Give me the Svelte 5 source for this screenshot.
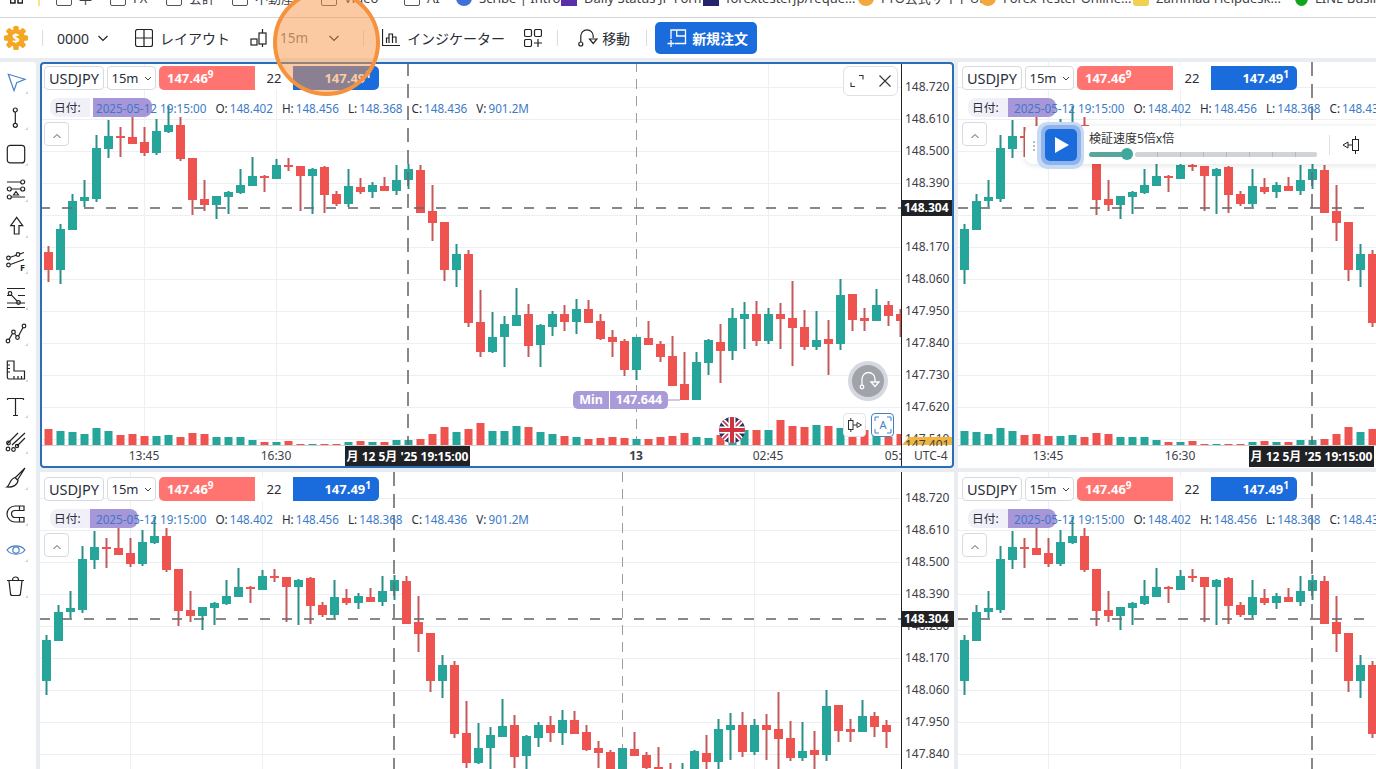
<script>
    // rows: wick top, body top, body bottom, wick bottom, colour, volume top (all in px of the first pane)
    const candles = [
        [246,252,270,282,'r',429],[224,229,270,284,'g',431],[194,201,230,230,'g',432],[180,197,201,207,'g',434],
        [135,148,199,202,'g',428],[120,136,149,158,'g',431],[127,136,138,157,'r',435],[113,137,144,144,'r',434],
        [127,142,153,156,'r',436],[119,131,153,155,'g',436],[106,125,132,133,'g',435],[117,125,159,161,'r',437],
        [158,158,200,215,'r',433],[180,199,205,211,'r',434],[196,196,205,219,'g',437],[191,192,197,214,'g',437],
        [169,185,193,194,'g',437],[157,176,186,186,'g',440],[175,176,178,192,'r',442],[159,165,179,179,'g',442],
        [158,165,167,171,'r',441],[166,166,176,211,'r',444],[168,169,176,214,'g',444],[166,167,195,213,'r',444],
        [191,194,204,206,'r',444],[169,186,204,207,'g',442],[178,187,192,194,'r',441],[182,185,192,198,'g',442],
        [177,186,191,191,'r',442],[165,180,191,195,'g',440],[164,169,180,189,'g',440],[165,170,213,213,'r',439],
        [185,211,223,241,'r',434],[222,222,270,281,'r',427],[244,254,270,287,'g',432],[250,254,323,327,'r',429],
        [290,322,352,357,'r',423],[312,337,352,353,'g',431],[316,324,337,367,'g',431],[288,315,326,326,'g',426],
        [304,314,346,357,'r',427],[324,325,345,367,'g',432],[311,314,327,336,'g',434],[305,314,322,331,'r',436],
        [299,309,322,334,'g',437],[300,309,323,323,'r',439],[314,321,339,340,'r',438],[330,337,342,357,'r',437],
        [339,341,370,376,'r',438],[337,337,370,380,'g',439],[321,338,345,345,'r',439],[341,344,357,362,'r',437],
        [336,356,386,386,'r',436],[352,384,400,400,'r',433],[352,362,400,400,'g',437],[339,340,363,375,'g',438],
        [324,342,351,383,'r',435],[308,318,351,360,'g',440],[302,314,319,349,'g',430],[301,314,341,346,'r',430],
        [308,314,341,344,'g',430],[303,314,319,349,'r',420],[281,318,328,366,'r',426],[310,327,347,350,'r',427],
        [311,340,347,350,'g',425],[320,339,344,375,'r',426],[279,295,344,350,'g',428],[294,294,320,331,'r',437],
        [308,318,321,331,'r',430],[289,305,321,321,'g',433],[301,305,316,326,'r',437],[309,314,321,337,'r',434]
    ];

    const prices = ['148.720','148.610','148.500','148.390','148.280','148.170','148.060','147.950','147.840','147.730','147.620','147.510'];

    const panes = [
        { id: 'a', x: 40, y: 62, w: 914, h: 406, dx: 0, dy: 0, axis: 901, tagLeft: 53, tagWidth: 59, lower: false },
        { id: 'b', x: 958, y: 62, w: 418, h: 406, dx: 904, dy: 0, axis: 0, tagLeft: 49, tagWidth: 49, lower: false },
        { id: 'c', x: 40, y: 472, w: 914, h: 297, dx: -14, dy: 411, axis: 901, tagLeft: 49, tagWidth: 49, lower: true },
        { id: 'd', x: 958, y: 472, w: 418, h: 297, dx: 904, dy: 411, axis: 0, tagLeft: 49, tagWidth: 49, lower: true }
    ];

    const bookmarks = [
        { icon: 'folder', label: '卆', w: 54 },
        { icon: 'folder', label: 'FX', w: 56 },
        { icon: 'folder', label: '会計', w: 66 },
        { icon: 'folder', label: '不動産', w: 89 },
        { icon: 'folder', label: 'Video', w: 83 },
        { icon: 'folder', label: 'AI', w: 52 },
        { icon: 'scribe', label: 'Scribe | Intro', w: 105 },
        { icon: 'purple', label: 'Daily Status JP Form', w: 142 },
        { icon: 'navy', label: 'forextesterjp/reque...', w: 155 },
        { icon: 'gear', label: 'FTO公式サイトURL', w: 122 },
        { icon: 'gear', label: 'Forex Tester Online...', w: 153 },
        { icon: 'note', label: 'Zammad Helpdesk...', w: 162 },
        { icon: 'line', label: 'LINE Business', w: 100 }
    ];
</script>

{#snippet corner()}
    <path class="corner" d="M24 21 L24 24 L21 24 Z" />
{/snippet}

{#snippet chart(p)}
    <svg class="chart" width={p.w} height={p.h} viewBox="{p.x} {p.y} {p.w} {p.h}">
        <defs>
            <clipPath id="plot-{p.id}">
                <rect x={p.x} y={p.y} width={(p.axis || p.x + p.w) - p.x} height={445 + p.dy - p.y} />
            </clipPath>
            <clipPath id="time-{p.id}">
                <rect x={p.x} y={p.y} width={(p.axis || p.x + p.w) - p.x} height={p.h} />
            </clipPath>
        </defs>
        <g clip-path="url(#plot-{p.id})">
            {#each prices as _, i}
                <line class="grid" x1={p.x} x2={p.x + p.w} y1={87.5 + i * 32 + p.dy} y2={87.5 + i * 32 + p.dy} />
            {/each}
            {#each [144, 276, 768] as gx}
                <line class="grid" x1={gx + p.dx + 0.5} x2={gx + p.dx + 0.5} y1={p.y} y2={445 + p.dy} />
            {/each}
            <line class="day" x1={636.5 + p.dx} x2={636.5 + p.dx} y1={p.y} y2={445 + p.dy} />
            <g transform="translate({p.dx} {p.dy})">
                {#each candles as c, k}
                    {@const cx = 48.5 + 12 * k}
                    <rect class="vol {c[4]}" x={cx - 4} y={c[5]} width="8" height={445 - c[5]} />
                    <line class="wick {c[4]}" x1={cx} x2={cx} y1={c[0]} y2={c[3]} />
                    <rect class="candle {c[4]}" x={cx - 4.5} y={c[1]} width="9" height={c[2] - c[1]} />
                {/each}
            </g>
            <line class="cross-h" x1={p.x} x2={p.x + p.w} y1={208 + p.dy} y2={208 + p.dy} />
            <line class="cross-v" x1={408 + p.dx} x2={408 + p.dx} y1={p.y} y2={445 + p.dy} />
        </g>
        <line class="base" x1={p.x} x2={p.axis || p.x + p.w} y1={445.5 + p.dy} y2={445.5 + p.dy} />

        {#if p.axis}
            {#each prices as label, i}
                {#if p.lower || i !== 4}
                    <text class="ax" x="905" y={91 + i * 32 + p.dy}>{label}</text>
                {/if}
            {/each}
            <polygon class="last-tag" points="{902},{445 + p.dy} {909},{437 + p.dy} {954},{437 + p.dy} {954},{445 + p.dy}" />
            <text class="ax" x="905" y={449 + p.dy}>147.401</text>
            <rect class="price-tag" x="902" y={200 + p.dy} width="52" height="16" />
            <text class="tag-text" x="904" y={212 + p.dy}>148.304</text>
        {/if}

        <rect class="time-strip" x={p.x} y={446 + p.dy} width={p.w} height="22" />
        <g clip-path="url(#time-{p.id})">
            <g transform="translate({p.dx} {p.dy})" text-anchor="middle">
                <text class="ax" x="144" y="460">13:45</text>
                <text class="ax" x="276" y="460">16:30</text>
                <text class="ax strong" x="636" y="460">13</text>
                <text class="ax" x="768" y="460">02:45</text>
                <text class="ax" x="900" y="460">05:45</text>
                <rect class="time-tag" x="345" y="446" width="125" height="21" />
                <text class="time-text" x="407.5" y="461">月 12 5月 '25 19:15:00</text>
            </g>
        </g>
        {#if p.axis}
            <text class="ax" x="914" y={460 + p.dy}>UTC-4</text>
            <line class="axis-line" x1={p.axis + 0.5} x2={p.axis + 0.5} y1={p.y} y2={467 + p.dy} />
        {/if}
    </svg>
{/snippet}

{#snippet header(p)}
    <div class="head">
        <div class="sym">USDJPY</div>
        <div class="tf">15m
            <svg width="8" height="5" viewBox="0 0 8 5"><path d="M1 1 L4 4 L7 1" /></svg>
        </div>
        <div class="quote">
            <span class="bid">147.46<sup>9</sup></span>
            <span class="spread">22</span>
            <span class="ask">147.49<sup>1</sup></span>
        </div>
    </div>
    <div class="event" style:left="{p.tagLeft}px" style:width="{p.tagWidth}px"></div>
    <div class="info">
        <span class="lbl">日付:</span>
        <span class="val date">2025-05-12 19:15:00</span>
        <span class="key">O:</span><span class="val">148.402</span>
        <span class="key">H:</span><span class="val">148.456</span>
        <span class="key">L:</span><span class="val">148.368</span>
        <span class="key">C:</span><span class="val">148.436</span>
        <span class="key">V:</span><span class="val">901.2M</span>
    </div>
    <button class="collapse" aria-label="collapse">
        <svg width="10" height="6" viewBox="0 0 10 6"><path d="M1.5 5 L5 1.5 L8.5 5" /></svg>
    </button>
{/snippet}

<div class="page">
    <div class="bookmarks">
        <svg class="apps" width="13" height="6" viewBox="0 0 13 6"><path d="M.5 -3 H5 V3 H.5 Z M8 -3 H12.5 V3 H8 Z" /></svg>
        <span class="bm-sep"></span>
        {#each bookmarks as b}
            <span class="bm" style:width="{b.w}px">
                <span class="bm-icon {b.icon}"></span>{b.label}
            </span>
        {/each}
    </div>

    <div class="toolbar">
        <svg class="logo" width="24" height="24" viewBox="0 0 24 24">
            {#each [0, 45, 90, 135, 180, 225, 270, 315] as a}
                <rect x="9.5" y="0" width="5" height="24" rx="1.5" fill="#f5a623" transform="rotate({a} 12 12)" />
            {/each}
            <circle cx="12" cy="12" r="9" fill="#f5a623" />
            <text x="12" y="16.5" text-anchor="middle" class="logo-text">$</text>
        </svg>
        <span class="sep s1"></span>
        <span class="tb-text acct">0000</span>
        <svg class="chev c1" width="12" height="7" viewBox="0 0 12 7"><path d="M1.5 1 L6 5.5 L10.5 1" /></svg>

        <svg class="tb-icon i-layout" width="18" height="18" viewBox="0 0 18 18"><rect x=".5" y=".5" width="17" height="17" rx="2" /><path d="M9 .5 V17.5 M.5 9 H17.5" /></svg>
        <span class="tb-text t-layout">レイアウト</span>

        <svg class="tb-icon i-candle" width="18" height="18" viewBox="0 0 18 18"><rect x="1" y="10" width="6" height="6" /><rect x="9" y="4" width="7" height="11" /><path d="M12.5 0 V4 M12.5 15 V18" /></svg>
        <span class="tb-text t-tf">15m</span>
        <svg class="chev c2" width="12" height="7" viewBox="0 0 12 7"><path d="M1.5 1 L6 5.5 L10.5 1" /></svg>
        <span class="sep s2"></span>

        <svg class="tb-icon i-ind" width="18" height="18" viewBox="0 0 18 18"><path d="M.5 0 V16 M0 16.5 H18 M4.5 14 V9 H7 V14 M7 14 V5 H10.5 V14 M10.5 14 V8 H14 V14" /></svg>
        <span class="tb-text t-ind">インジケーター</span>
        <svg class="tb-icon i-add" width="18" height="18" viewBox="0 0 18 18"><rect x=".5" y=".5" width="7" height="7" rx="1.5" /><rect x="10.5" y=".5" width="7" height="7" rx="1.5" /><rect x=".5" y="10.5" width="7" height="7" rx="1.5" /><path d="M14 10 V18 M10 14 H18" /></svg>
        <span class="sep s3"></span>

        <svg class="tb-icon i-move" width="20" height="20" viewBox="0 0 20 20"><circle cx="2.8" cy="16" r="2" /><path d="M2.8 14 V8 a6.2 6.2 0 0 1 12.4 0 V10" /><path d="M11.5 11 H19 L15.2 15.5 Z" /></svg>
        <span class="tb-text t-move">移動</span>
        <span class="sep s4"></span>

        <button class="order">
            <svg width="20" height="20" viewBox="0 0 20 20"><path d="M4 11 V2 H18.5 V15.5 H8 M9.7 2 V8 H18.5" /><path d="M4 12 V19 M.5 15.5 H7.5" /></svg>
            新規注文
        </button>
    </div>

    <div class="body">
        <aside class="tools">
            <!-- icon strokes traced off the left rail -->
            <svg class="tool blue" viewBox="0 0 24 24"><path d="M4.3 4.3 L21 9.3 L12.7 12.7 L10 20.7 Z" />{@render corner()}</svg>
            <svg class="tool" viewBox="0 0 24 24"><circle cx="11.3" cy="4" r="2" /><circle cx="11.3" cy="19.3" r="2" /><path d="M11.3 6 V17.3" />{@render corner()}</svg>
            <svg class="tool" viewBox="0 0 24 24"><rect x="3.3" y="3.3" width="17.4" height="17.6" rx="3" />{@render corner()}</svg>
            <svg class="tool" viewBox="0 0 24 24"><path d="M3 4 H16.7 M7.3 11 H16.7 M7.3 19 H21" /><circle cx="18.7" cy="4" r="2" /><circle cx="5.3" cy="11" r="2" /><circle cx="18.7" cy="11" r="2" /><circle cx="5.3" cy="19" r="2" /><path d="M12 13.5 L14.5 17 H9.5 Z" />{@render corner()}</svg>
            <svg class="tool" viewBox="0 0 24 24"><path d="M12.7 3.3 L18.7 11.7 H15 V20 H10.3 V11.7 H6.7 Z" />{@render corner()}</svg>
            <svg class="tool" viewBox="0 0 24 24"><circle cx="4.5" cy="8" r="1.8" /><circle cx="14" cy="4.5" r="1.8" /><circle cx="4.5" cy="15" r="1.8" /><path d="M6.3 7.3 L12.2 5.2 M15.8 4 L20 2.5 M6.3 14.5 L20 9.5" /><text class="tool-f" x="16" y="20.5">F</text>{@render corner()}</svg>
            <svg class="tool" viewBox="0 0 24 24"><path d="M3 2.5 H21 M3 17 H21 M3 21.5 H21 M3 9.5 H8 M14 9.5 H21" /><circle cx="6" cy="7.5" r="1.8" /><circle cx="14.5" cy="16.5" r="1.8" /><path d="M7.3 8.8 L13.2 15.2" />{@render corner()}</svg>
            <svg class="tool" viewBox="0 0 24 24"><circle cx="4" cy="19" r="1.8" /><circle cx="9.5" cy="10" r="1.8" /><circle cx="13.5" cy="15.5" r="1.8" /><circle cx="20" cy="4" r="1.8" /><path d="M5 17.5 L8.5 11.5 M10.5 11.5 L12.5 14 M14.5 14 L19 5.5" />{@render corner()}</svg>
            <svg class="tool" viewBox="0 0 24 24"><path d="M3.3 3 H10 V13 H20.5 V21 H5 A1.7 1.7 0 0 1 3.3 19.3 Z M3.3 7 H6 M3.3 10.5 H6 M3.3 14 H6 M10 21 V18 M14 21 V18 M17.5 21 V18" />{@render corner()}</svg>
            <svg class="tool" viewBox="0 0 24 24"><path d="M3.5 4.5 H19.5 M3.5 4.5 V6 M19.5 4.5 V6 M11.5 4.5 V21.5 M9 21.5 H14" />{@render corner()}</svg>
            <svg class="tool" viewBox="0 0 24 24"><path d="M3 14 L14 3 M8 15 L21 3 M13 16 L21 8" /><circle cx="4" cy="19" r="1.8" /><circle cx="9.5" cy="19.5" r="1.8" /><circle cx="4.5" cy="13" r="1.8" /><circle cx="13" cy="16" r="1.6" />{@render corner()}</svg>
            <svg class="tool" viewBox="0 0 24 24"><path d="M21 2 L11 12 M21 2 L13.5 14 M11 11.5 L14 14.5 C13.5 19 9 21.5 3 21 C6 19.5 5.5 13 11 11.5 Z" />{@render corner()}</svg>
            <svg class="tool" viewBox="0 0 24 24"><path d="M20 4 H11 A8 8 0 0 0 11 20 H20 V15.5 H11 A3.5 3.5 0 0 1 11 8.5 H20 Z M15.5 4 V8.5 M15.5 15.5 V20" />{@render corner()}</svg>
            <svg class="tool blue" viewBox="0 0 24 24"><path d="M3 12 C7 6.5 17 6.5 21 12 C17 17.5 7 17.5 3 12 Z" /><circle cx="12" cy="12" r="3.2" />{@render corner()}</svg>
            <svg class="tool" viewBox="0 0 24 24"><path d="M3 6.5 H20 M8.5 6 A3 3 0 0 1 14.5 6 M5 7 L6.5 19.5 A2 2 0 0 0 8.5 21.5 H14.5 A2 2 0 0 0 16.5 19.5 L18 7" />{@render corner()}</svg>
        </aside>

        <div class="panes">
            {#each panes as p}
                <section class="pane" class:lower={p.lower} class:active={p.id === 'a'}>
                    {@render chart(p)}
                    {@render header(p)}

                    {#if p.id === 'a'}
                        <div class="win-box">
                            <svg width="18" height="18" viewBox="0 0 18 18"><path d="M11 3.5 H15 V7.5 M3 10.5 V14.5 H7" /></svg>
                            <svg width="18" height="18" viewBox="0 0 18 18"><path d="M3.5 3.5 L14.5 14.5 M14.5 3.5 L3.5 14.5" /></svg>
                        </div>
                        <div class="min-line"></div>
                        <div class="min-tag"><span class="min-k">Min</span><span class="min-v">147.644</span></div>
                        <div class="round">
                            <div class="round-in">
                                <svg width="24" height="24" viewBox="0 0 24 24"><circle cx="6" cy="18" r="1.8" /><path d="M6 16 V10 a6.5 6.5 0 0 1 13 0 V12" /><path d="M15 13 H23 L19 17.5 Z" /></svg>
                            </div>
                        </div>
                        <div class="mini m-candle">
                            <svg width="16" height="16" viewBox="0 0 16 16"><rect x="1.5" y="3.5" width="4.5" height="9" /><path d="M3.8 1 V3.5 M3.8 12.5 V15 M6 8 H10" /><path d="M10 5.5 L14.5 8 L10 10.5 Z" /></svg>
                        </div>
                        <div class="mini m-auto">
                            <svg width="18" height="18" viewBox="0 0 18 18"><path d="M1 5 V1 H5 M13 1 H17 V5 M17 13 V17 H13 M5 17 H1 V13" /><text class="mini-a" x="9" y="13">A</text></svg>
                        </div>
                        <svg class="flag" width="26" height="26" viewBox="0 0 26 26">
                            <defs><clipPath id="flag-clip"><circle cx="13" cy="13" r="13" /></clipPath></defs>
                            <g clip-path="url(#flag-clip)">
                                <rect width="26" height="26" fill="#2b2f66" />
                                <path d="M0 0 L26 26 M26 0 L0 26" stroke="#fff" stroke-width="5" />
                                <path d="M0 0 L26 26 M26 0 L0 26" stroke="#d0323f" stroke-width="1.6" />
                                <path d="M13 0 V26 M0 13 H26" stroke="#fff" stroke-width="7" />
                                <path d="M13 0 V26 M0 13 H26" stroke="#d0323f" stroke-width="4" />
                            </g>
                        </svg>
                    {/if}

                    {#if p.id === 'b'}
                        <div class="replay">
                            <span class="drag"></span>
                            <div class="halo">
                                <div class="halo-mid">
                                    <button class="play" aria-label="play">
                                        <svg width="16" height="18" viewBox="0 0 16 18"><path d="M1 1 L15 9 L1 17 Z" /></svg>
                                    </button>
                                </div>
                            </div>
                            <div class="speed">
                                <div class="speed-text">検証速度5倍x倍</div>
                                <div class="slider">
                                    <span class="fill"></span>
                                    <span class="thumb"></span>
                                    <span class="track"></span>
                                </div>
                            </div>
                            <span class="replay-sep"></span>
                            <svg class="step" width="18" height="18" viewBox="0 0 18 18"><path d="M1 9 L6 6 V12 Z" /><path d="M6 9 H10" /><rect x="10.5" y="3.5" width="6" height="11" /><path d="M13.5 0 V3.5 M13.5 14.5 V18" /></svg>
                        </div>
                    {/if}
                </section>
            {/each}
        </div>
    </div>

    <div class="spot"></div>
</div>

<style>
    :global(body) {
        margin: 0;
    }

    .page {
        position: relative;
        width: 1376px;
        height: 769px;
        overflow: hidden;
        background: #e9edf2;
        color: #2a2e39;
        font-family: "Noto Sans", "Noto Sans CJK JP", sans-serif;
    }

    /* bookmark strip, only the bottom of it is in frame */
    .bookmarks {
        display: flex;
        align-items: flex-start;
        height: 18px;
        padding-left: 10px;
        box-sizing: border-box;
        background: #fff;
        border-bottom: 1px solid #d4d5d8;
        overflow: hidden;
        font-size: 13px;
        line-height: 16px;
        color: #3c4043;
    }

    .apps {
        flex: none;
        margin-right: 15px;
    }

    .apps path {
        fill: none;
        stroke: #222;
        stroke-width: 1.5;
    }

    .bm-sep {
        flex: none;
        width: 2px;
        height: 6px;
        background: #f6e58d;
        margin-right: 16px;
    }

    .bm {
        flex: none;
        display: flex;
        gap: 7px;
        margin-top: -10px;
        white-space: nowrap;
    }

    .bm-icon {
        flex: none;
        width: 16px;
        height: 16px;
        box-sizing: border-box;
    }

    .folder {
        border: 1.5px solid #555;
        border-radius: 2px;
    }

    .scribe {
        border-radius: 50%;
        background: #3f6fd8;
    }

    .purple {
        background: #5b2fa8;
    }

    .navy {
        background: #24246a;
    }

    .gear {
        border-radius: 50%;
        background: #f2a83a;
    }

    .note {
        background: #f0d050;
        border-radius: 3px;
    }

    .line {
        width: 13px;
        border-radius: 50%;
        background: #12a51c;
    }

    .toolbar {
        display: flex;
        align-items: center;
        height: 40px;
        padding-left: 4px;
        background: #fff;
        font-size: 14px;
    }

    .sep {
        flex: none;
        width: 1px;
        height: 16px;
        background: #d9dce1;
    }

    .s1 { margin-left: 14px; }
    .s2 { margin-left: 23px; }
    .s3 { margin-left: 15px; }
    .s4 { margin-left: 16px; }

    .tb-text {
        flex: none;
        white-space: nowrap;
    }

    .acct { margin-left: 14px; }
    .t-layout { margin-left: 7px; }
    .t-tf { margin-left: 12px; font-size: 13.5px; color: #777; }
    .t-ind { margin-left: 7px; }
    .t-move { margin-left: 4px; }

    .chev {
        flex: none;
    }

    .chev path, .tb-icon path, .tb-icon rect, .tb-icon circle {
        fill: none;
        stroke: #222;
        stroke-width: 1.2;
    }

    .c1 { margin-left: 8px; }
    .c2 { margin-left: 20px; }

    .tb-icon {
        flex: none;
    }

    .i-layout { margin-left: 26px; }
    .i-candle { margin-left: 20px; }
    .i-ind { margin-left: 18px; }
    .i-add { margin-left: 19px; }
    .i-move { margin-left: 20px; }

    .logo-text {
        font-size: 13px;
        font-weight: 700;
        fill: #fff;
    }

    .order {
        flex: none;
        display: flex;
        align-items: center;
        gap: 5px;
        width: 102px;
        height: 32px;
        margin: 0 0 0 8px;
        padding: 0 0 0 12px;
        border: none;
        border-radius: 5px;
        background: #1a6bdc;
        color: #fff;
        font: 700 14px "Noto Sans", "Noto Sans CJK JP", sans-serif;
    }

    .order svg {
        flex: none;
    }

    .order path {
        fill: none;
        stroke: #fff;
        stroke-width: 1.3;
    }

    .body {
        display: flex;
        height: 707px;
        margin-top: 4px;
    }

    .tools {
        flex: none;
        display: flex;
        flex-direction: column;
        width: 36px;
        margin-right: 4px;
        padding-top: 2px;
        box-sizing: border-box;
        background: #fff;
        border-radius: 0 3px 0 0;
    }

    .tool {
        flex: none;
        width: 24px;
        height: 24px;
        padding: 6px 8px 6px 4px;
    }

    .tool path, .tool circle, .tool rect {
        fill: none;
        stroke: #222;
        stroke-width: 1.2;
    }

    .tool.blue path, .tool.blue circle {
        stroke: #4a80c8;
    }

    .tool path.corner, .tool.blue path.corner {
        fill: #d3d5d9;
        stroke: none;
    }

    .tool-f {
        font-size: 9px;
        font-weight: 700;
        fill: #222;
    }

    .panes {
        display: grid;
        grid-template-columns: 914px 418px;
        grid-template-rows: 406px 297px;
        gap: 4px;
    }

    .pane {
        position: relative;
        overflow: hidden;
        background: #fff;
        --off: 0px;
    }

    .pane.lower {
        --off: 1px;
    }

    .pane.active::after {
        content: "";
        position: absolute;
        inset: 0;
        border: 2px solid #2a6db8;
        border-radius: 4px;
        pointer-events: none;
    }

    .chart {
        display: block;
    }

    .grid {
        stroke: #eceff3;
        stroke-width: 1;
    }

    .day {
        stroke: #9a9da3;
        stroke-width: 1;
        stroke-dasharray: 10 7;
    }

    .vol.r, .candle.r { fill: #ef5350; }
    .vol.g, .candle.g { fill: #26a69a; }
    .wick { stroke-width: 2; }
    .wick.r { stroke: #c25a5c; }
    .wick.g { stroke: #2b8f88; }

    .cross-h {
        stroke: #6a6a6a;
        stroke-opacity: 0.8;
        stroke-width: 2;
        stroke-dasharray: 10 12;
    }

    .cross-v {
        stroke: #6a6a6a;
        stroke-opacity: 0.8;
        stroke-width: 2;
        stroke-dasharray: 14 8;
    }

    .base {
        stroke: #cfcfcf;
    }

    .ax {
        font-size: 12px;
        fill: #3d4048;
    }

    .ax.strong {
        font-weight: 700;
    }

    .last-tag {
        fill: #f3b43e;
    }

    .price-tag, .time-tag {
        fill: #1f2124;
    }

    .tag-text {
        font-size: 12px;
        font-weight: 700;
        fill: #fff;
    }

    .time-strip {
        fill: #fff;
    }

    .time-text {
        font-size: 12px;
        font-weight: 700;
        fill: #fff;
    }

    .axis-line {
        stroke: #222;
        stroke-width: 1;
    }

    .head {
        position: absolute;
        top: calc(4px + var(--off));
        left: 4px;
        display: flex;
        gap: 3px;
    }

    .sym, .tf {
        display: flex;
        align-items: center;
        justify-content: center;
        box-sizing: border-box;
        height: 24px;
        background: #fff;
        border: 1px solid #d8dadf;
        border-radius: 4px;
    }

    .sym {
        width: 60px;
        font-size: 14.5px;
    }

    .tf {
        gap: 5px;
        width: 49px;
        font-size: 13px;
    }

    .tf path {
        fill: none;
        stroke: #444;
    }

    .quote {
        display: flex;
        width: 220px;
        height: 24px;
        border-radius: 5px;
        overflow: hidden;
        font-size: 13px;
        line-height: 24px;
    }

    .quote sup {
        font-size: 10px;
        line-height: 0;
    }

    .bid, .ask {
        color: #fff;
        font-weight: 700;
    }

    .bid {
        width: 96px;
        padding-left: 8px;
        box-sizing: border-box;
        background: #ff7470;
    }

    .spread {
        width: 38px;
        text-align: center;
        background: #fff;
    }

    .ask {
        width: 86px;
        padding-right: 8px;
        box-sizing: border-box;
        text-align: right;
        background: #1a6bdc;
    }

    .event {
        position: absolute;
        top: calc(36px + var(--off));
        height: 19px;
        border-radius: 0 8px 8px 0;
        background: #a796d8;
    }

    .info {
        position: absolute;
        top: calc(36px + var(--off));
        left: 10px;
        display: flex;
        align-items: center;
        height: 19px;
        font-size: 11.7px;
        white-space: nowrap;
    }

    .lbl {
        width: 40px;
        height: 19px;
        line-height: 19px;
        padding-left: 4px;
        margin-right: 6px;
        box-sizing: border-box;
        border-radius: 8px 0 0 8px;
        background: #f1f0f8;
    }

    .key {
        margin-left: 9px;
        margin-right: 2px;
    }

    .val {
        color: #3b7ac7;
    }

    .collapse {
        position: absolute;
        top: calc(60px + var(--off));
        left: 4px;
        width: 25px;
        height: 24px;
        padding: 0;
        border: 1px solid #d8dadf;
        border-radius: 4px;
        background: #fff;
    }

    .collapse path {
        fill: none;
        stroke: #555;
    }

    .win-box {
        position: absolute;
        top: 4px;
        left: 803px;
        display: flex;
        align-items: center;
        justify-content: center;
        gap: 10px;
        box-sizing: border-box;
        width: 55px;
        height: 30px;
        background: #fff;
        border: 1px solid #dfe1e5;
        border-radius: 6px;
    }

    .win-box path {
        fill: none;
        stroke: #333;
        stroke-width: 1.1;
    }

    .min-line {
        position: absolute;
        top: 337px;
        left: 628px;
        width: 12px;
        height: 2px;
        background: #cfc8e8;
    }

    .min-tag {
        position: absolute;
        top: 329px;
        left: 533px;
        display: flex;
        width: 95px;
        height: 18px;
        border-radius: 5px;
        overflow: hidden;
        background: #a99ad9;
        color: #fff;
        font-size: 12.5px;
        font-weight: 700;
        line-height: 18px;
    }

    .min-k {
        width: 36px;
        text-align: center;
        border-right: 1px solid #fff;
    }

    .min-v {
        flex: 1;
        text-align: center;
    }

    .round {
        position: absolute;
        top: 299px;
        left: 808px;
        display: flex;
        align-items: center;
        justify-content: center;
        width: 40px;
        height: 40px;
        border-radius: 50%;
        background: #d5d8de;
    }

    .round-in {
        display: flex;
        align-items: center;
        justify-content: center;
        width: 32px;
        height: 32px;
        border-radius: 50%;
        background: #a0a3aa;
    }

    .round path, .round circle {
        fill: none;
        stroke: #fff;
        stroke-width: 1.3;
    }

    .mini {
        position: absolute;
        top: 351px;
        display: flex;
        align-items: center;
        justify-content: center;
        box-sizing: border-box;
        width: 23px;
        height: 24px;
        background: #fff;
        border: 1px solid #e2e4e8;
        border-radius: 4px;
    }

    .m-candle {
        left: 803px;
    }

    .m-candle path, .m-candle rect {
        fill: none;
        stroke: #333;
    }

    .m-auto {
        left: 831px;
        border-color: #3f7fc6;
    }

    .m-auto path {
        fill: none;
        stroke: #3f7fc6;
    }

    .mini-a {
        font-size: 11px;
        fill: #3f7fc6;
        text-anchor: middle;
    }

    .flag {
        position: absolute;
        top: 355px;
        left: 679px;
    }

    .replay {
        position: absolute;
        top: 64px;
        left: 67px;
        display: flex;
        align-items: center;
        width: 420px;
        height: 38px;
        background: #fff;
        border-radius: 8px;
        box-shadow: 0 1px 6px rgba(0, 0, 0, 0.12);
    }

    .drag {
        flex: none;
        width: 5px;
        height: 11px;
        margin-left: 7px;
        background-image: radial-gradient(#b8bbc0 1px, transparent 1.2px);
        background-size: 4px 4px;
    }

    .halo {
        flex: none;
        display: flex;
        align-items: center;
        justify-content: center;
        width: 47px;
        height: 47px;
        margin: 0 5px 0 0;
        border-radius: 10px;
        background: #c6daf6;
    }

    .halo-mid {
        padding: 4px;
        border-radius: 8px;
        background: #8fb4ec;
        display: flex;
    }

    .play {
        display: flex;
        align-items: center;
        justify-content: center;
        width: 32px;
        height: 32px;
        padding: 0 0 0 2px;
        border: none;
        border-radius: 5px;
        background: #1a6bdc;
    }

    .play path {
        fill: #fff;
    }

    .speed {
        flex: none;
        width: 228px;
    }

    .speed-text {
        height: 18px;
        font-size: 12px;
        line-height: 18px;
        color: #333;
    }

    .slider {
        display: flex;
        align-items: center;
        height: 12px;
    }

    .fill {
        width: 34px;
        height: 5px;
        background: #5aa69c;
        border-radius: 3px 0 0 3px;
    }

    .thumb {
        flex: none;
        width: 12px;
        height: 12px;
        margin-left: -2px;
        border-radius: 50%;
        background: #3fa89c;
    }

    .track {
        width: 182px;
        height: 5px;
        margin-left: 2px;
        border-radius: 2px;
        background: #d0d4d8 repeating-linear-gradient(90deg, transparent 0 22px, #b5b9be 22px 23px);
    }

    .replay-sep {
        flex: none;
        width: 1px;
        height: 20px;
        margin-left: 12px;
        background: #dcdfe3;
    }

    .step {
        flex: none;
        margin-left: 12px;
    }

    .step path, .step rect {
        fill: none;
        stroke: #222;
    }

    .spot {
        position: absolute;
        top: -11px;
        left: 273px;
        box-sizing: border-box;
        width: 107px;
        height: 107px;
        border: 4px solid #f5923e;
        border-radius: 50%;
        background: rgba(250, 150, 70, 0.5);
    }
</style>
